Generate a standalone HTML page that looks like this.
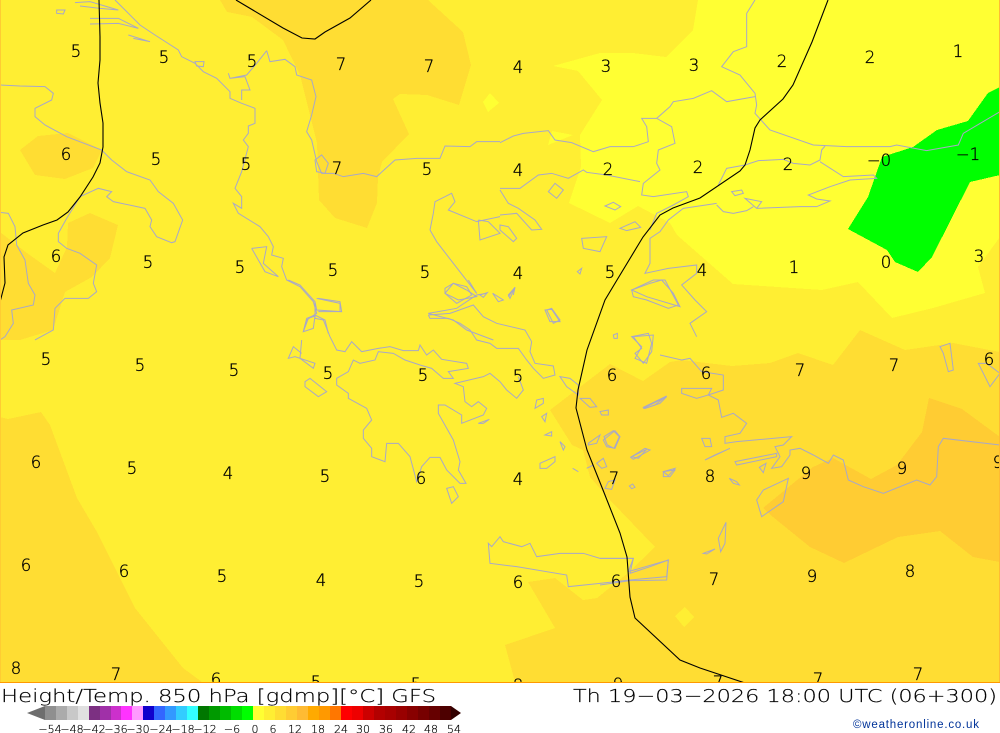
<!DOCTYPE html>
<html><head><meta charset="utf-8"><style>
html,body{margin:0;padding:0;background:#fff;width:1000px;height:733px;overflow:hidden}
svg{display:block;position:absolute;left:0;top:0}
.f polygon{shape-rendering:crispEdges;stroke:none}
.c polyline,.c polygon{fill:none;stroke:#a8a8c8;stroke-width:1;vector-effect:non-scaling-stroke}
.b polyline{fill:none;stroke:#000;stroke-width:1.1}
.n text{font:200 16.5px "DejaVu Sans",sans-serif;fill:#000;stroke:#000;stroke-width:.3;text-anchor:middle}
</style></head><body>
<svg width="1000" height="733" viewBox="0 0 1000 733" xmlns="http://www.w3.org/2000/svg">
<defs><clipPath id="m"><rect width="1000" height="682"/></clipPath></defs>
<g clip-path="url(#m)">
<rect width="1000" height="682" fill="#ffee33"/>
<g class="f">
<polygon fill="#ffff33" points="698,0 693,30 666,57 633,53 600,53 553,66 578,71 602,100 580,135 581,167 569,203 610,223 638,206 670,223 677,235 733,284 822,290 858,282 892,318 933,308 985,293 978,267 1000,237 1000,0"/>
<polygon fill="#ffff33" points="552,131 573,135 548,145"/>
<polygon fill="#ffff33" points="490,93 499,103 488,112 483,102"/>
<polygon fill="#ffdd33" points="220,0 227,12 252,17 283,40 300,75 317,143 319,200 335,218 367,228 377,203 378,177 382,162 409,134 393,99 400,94 427,95 459,105 471,65 463,32 428,0"/>
<polygon fill="#ffdd33" points="20,150 38,136 68,133 102,150 93,168 65,179 35,175"/>
<polygon fill="#ffdd33" points="0,232 27,253 55,273 67,247 68,223 90,213 118,225 110,258 92,277 65,292 53,330 20,340 0,340"/>
<polygon fill="#ffdd33" points="0,417 8,419 41,412 50,425 77,498 97,532 135,608 183,668 202,682 0,682"/>
<polygon fill="#ffdd33" points="1000,352 953,343 905,350 860,330 833,365 798,353 770,363 732,366 682,360 670,362 643,381 610,364 550,410 572,445 583,450 590,477 610,500 655,547 628,573 597,598 583,600 555,578 528,582 555,628 505,645 515,682 1000,682"/>
<polygon fill="#ffee33" points="685,607 694,617 684,627 675,616"/>
<polygon fill="#ffcc33" points="929,398 962,409 1000,437 1000,562 973,557 940,531 898,537 844,563 810,547 773,517 763,508 813,467 833,458 871,479 897,465 922,432"/>
<polygon fill="#00ff00" points="1000,87 988,93 968,121 937,130 913,147 882,157 875,177 868,197 848,229 887,250 895,262 918,272 932,257 970,182 1000,175"/>
</g>

<g class="c" transform="scale(.33333)">
<polyline points="345,0 385,40 420,75 465,105 535,150 545,170 585,190 610,215 650,235 690,275 690,295 725,310 765,325 765,370 745,378 745,400 730,420 745,440 725,515 705,565 725,590 725,625 700,610 715,640 780,680 805,710 820,740 815,765 850,775 845,800 860,840 900,860 940,905 950,940 920,960 910,995"/>
<polyline points="0,255 60,258 135,260 160,280 155,300 105,325 105,350 135,375 200,410 305,450 335,480 380,515 450,540 475,575 520,610 548,660 525,725 515,728 470,710 450,680 455,660 435,625 340,605 320,590 335,575 295,565 240,590 200,655 175,700 175,725 200,745 240,760 290,795 280,850 290,875 265,895 195,895 165,925 160,990 105,1020"/>
<polyline points="0,637 25,640 45,680 50,735 75,780 85,850 105,885 100,915 35,930 40,970 15,1010 0,1020"/>
<polyline points="225,8 270,5 355,30 300,25 240,18"/>
<polygon points="170,30 195,30 190,42 170,40"/>
<polyline points="270,55 355,55 415,85 355,70 270,72"/>
<polyline points="385,105 450,125 400,115"/>
<polygon points="585,185 612,185 610,200 590,198"/>
<polyline points="800,152 770,190 740,225 690,235 685,220 690,235 735,230 750,270 725,270 725,300"/>
<polyline points="800,152 810,185 855,178 885,200 890,225 935,240 948,290 935,345 920,395 935,420 950,485 965,520 1000,520 1030,530 1090,520 1130,530 1185,480 1250,475 1320,475 1335,438 1410,440 1430,425 1500,425"/>
<polyline points="1290,690 1300,640 1305,605 1355,580 1365,605 1345,630 1430,665 1500,650"/>
<polyline points="1290,690 1310,725 1360,790 1430,880"/>
<polygon points="1335,865 1360,850 1400,870 1430,890 1375,900 1335,880"/>
<polyline points="1285,940 1370,925 1430,885 1460,880"/>
<polyline points="1285,940 1360,960 1400,990 1480,1020"/>
<polyline points="755,745 800,740 790,790 835,830 795,815 755,745"/>
<polygon points="950,515 945,480 965,465 985,490 975,520"/>
<polyline points="955,895 1020,905 1025,935 950,930 945,905"/>
<polyline points="910,995 920,955 945,945 975,960 985,1000"/>
<polyline points="1435,660 1465,665 1500,700 1440,720 1435,660"/>
</g>

<g class="c" transform="translate(500,0) scale(.33333)">
<polyline points="0,428 40,408 70,400 145,392 165,420 215,428 280,455 330,440 400,440 445,425 440,380 425,355 470,355 515,380 525,430 475,450 470,490 480,510 430,550 425,585 460,590 560,575 565,590 520,615 470,640 450,690"/>
<polyline points="765,0 740,40 740,140 700,155 665,200 720,225 765,280 770,315 765,340 810,390 940,435 1040,440 1170,440 1190,435 1280,452 1375,435 1390,400 1500,335"/>
<polyline points="470,355 510,320 520,305 580,295 635,272 680,305 765,290"/>
<polyline points="0,565 60,565 115,525 155,520 205,535 250,510 260,517 320,525 420,545"/>
<polyline points="655,555 680,505 735,495 775,482 850,478 880,490 930,495 960,480 965,450 975,438"/>
<polyline points="960,485 1030,530 1120,525 1130,535 1050,540 990,560 925,585 950,597 990,603 950,620 900,620 770,625 735,595 785,605 770,625"/>
<polyline points="650,615 670,635 700,640 740,632 760,620"/>
<polyline points="650,610 550,625 505,660 480,695 450,715 450,790 435,820 505,805 590,795 590,820 545,855 585,900 620,935 570,970 590,1010"/>
<polygon points="145,575 165,550 190,570 170,595"/>
<polygon points="315,618 340,607 362,620 345,630"/>
<polygon points="360,685 405,665 422,682 380,692"/>
<polygon points="695,575 725,570 730,580 705,587"/>
<polygon points="245,715 320,710 300,755 250,745"/>
<polygon points="395,870 460,840 495,840 535,915 505,925 440,900 400,890"/>
<polyline points="0,570 25,610 55,625 105,660 125,688 95,690 50,640 0,645"/>
<polygon points="0,675 25,680 50,715 40,725 0,690"/>
<polygon points="140,930 155,925 180,960 160,970"/>
<polygon points="232,815 245,805 240,822"/>
<polygon points="25,885 45,862 30,895"/>
<polygon points="340,1005 352,1000 352,1015 342,1015"/>
</g>

<g class="c" transform="translate(250,280) scale(.33333)">
<polyline points="115,0 150,15 195,65 195,115 220,120 240,170 260,210 285,215 305,185 335,215 385,205 420,200 460,212 505,212 510,195 530,225 550,210 575,238 650,250 655,265 595,275 610,295 580,295 545,265 510,255 465,240 430,220 385,215 375,240 330,250 310,240 295,275 260,295 260,315 295,340 295,355 350,385 365,420 340,450 340,475 365,505 365,530 405,545 410,490 445,490 480,530 500,605 515,560 540,532 570,532 590,570 630,610 648,610 625,570 630,545 610,480 565,400 565,375 585,375 635,405 635,430 700,405 710,385 685,365 665,380 645,365 640,320 615,310 700,290 720,280 750,305 770,330 800,355 820,330 805,290"/>
<polygon points="585,40 610,10 650,20 665,45 620,70"/>
<polyline points="655,0 680,40"/>
<polyline points="535,105 600,100 670,75 700,110 740,130 825,150 845,185 840,215 855,250 910,258 915,285 880,295 850,265 830,240 805,205 740,205 720,190 680,180 660,150 630,130 595,115 540,115 535,105"/>
<polyline points="200,55 270,70 270,95 205,95"/>
<polygon points="160,155 175,115 195,108 190,145"/>
<polyline points="155,180 150,235 190,265 195,250 135,230 115,235 130,200 155,220"/>
<polygon points="165,305 180,295 230,335 205,350 165,320"/>
<polygon points="590,625 610,620 625,650 605,670"/>
<polygon points="715,790 720,850 800,860 950,885 955,920 1050,910 1140,900 1250,890 1255,840 1200,860 1140,880 1150,835 1050,835 1000,820 930,820 860,830 840,790 815,800 760,785 750,770 725,800"/>
<polygon points="885,90 905,88 930,125 900,125"/>
<polygon points="855,385 860,360 880,355 880,370"/>
<polygon points="875,410 890,400 885,425"/>
<polygon points="885,465 905,455 905,468"/>
<polygon points="930,485 945,500 940,510"/>
<polygon points="870,550 915,530 915,545 890,565 870,565"/>
<polygon points="930,290 960,295 985,315 985,345 950,320"/>
<polygon points="990,355 1020,355 1040,380 1020,382"/>
<polygon points="1050,395 1075,390 1075,405 1055,405"/>
<polygon points="1015,490 1050,465 1040,490 1015,495"/>
<polygon points="1060,480 1095,452 1110,470 1095,505 1070,500"/>
<polygon points="1040,550 1060,535 1070,560 1055,565"/>
<polygon points="1145,530 1190,508 1165,535"/>
<polygon points="1180,385 1250,350 1230,370 1185,385"/>
<polygon points="1240,575 1275,570 1260,590 1240,590"/>
<polygon points="1145,30 1200,10 1235,0 1270,40 1290,80 1190,50"/>
<polygon points="1145,170 1195,160 1205,190 1190,250 1155,235 1175,200"/>
<polygon points="728,40 760,60 745,65"/>
<polyline points="775,50 795,22 790,45"/>
<polygon points="690,45 712,38 700,52"/>
<polygon points="685,430 718,418 700,430"/>
<polygon points="1075,605 1095,600 1085,628 1065,625"/>
<polyline points="1010,565 1030,555"/>
<polyline points="968,565 985,575"/>
<polygon points="1138,618 1148,612 1155,622 1145,626"/>
</g>

<g class="c" transform="translate(600,330) scale(.33333)">
<polyline points="180,75 245,90 270,85 305,125 370,135 370,180 325,195 355,210 365,262 400,250 440,280 420,310 375,320 375,340 410,335 575,320 550,345 525,350 540,380 515,415 545,410 570,375 570,360 600,355 640,375 685,400 700,375 730,390 745,450 790,470 850,490 950,450 990,465 1010,440 1015,350 1030,325 1200,345"/>
<polygon points="245,175 335,175 325,195 290,205 245,190"/>
<polygon points="130,232 200,198 165,225 135,235"/>
<polygon points="405,395 530,370 530,380 410,405"/>
<polygon points="315,390 390,355 345,375"/>
<polygon points="470,510 490,480 565,445 550,515 485,560"/>
<polygon points="305,325 330,325 335,350 315,350"/>
<polygon points="190,425 225,415 205,437"/>
<polygon points="355,625 378,577 375,640 362,665"/>
<polygon points="310,670 345,657 320,672"/>
<polyline points="0,685 100,685 85,725 205,690 200,750 90,752 0,765"/>
<polygon points="1020,50 1050,40 1060,120 1045,125 1030,70"/>
<polygon points="1135,100 1160,100 1200,130 1170,170 1150,130"/>
<polygon points="100,20 160,15 155,65 130,100 105,70 125,55"/>
<polygon points="388,445 410,455 418,465 400,460"/>
<polygon points="478,412 498,400 490,428"/>
<polygon points="12,320 40,302 58,320 42,355 22,345"/>
<polygon points="92,382 135,355 150,360 100,388"/>
</g>

<g class="b">
<polyline points="99,0 100,37 100,60 98,83 100,103 103,123 103,147 100,163 93,177 80,197 68,212 57,220 43,225 23,233 8,245 4,257 5,283 0,302"/>
<polyline points="236,0 283,28 302,38 315,39 325,32 350,18 371,0"/>
<polyline points="828,0 812,42 793,85 783,99 760,120 755,128 750,150 745,165 740,171 700,198 673,208 660,215 643,237 617,280 605,300 587,350 578,390 576,408 587,450 603,490 620,533 627,557 630,597 635,618 680,660 700,668 745,683"/>
</g>

<g class="n">
<text x="76" y="57">5</text><text x="164" y="63">5</text><text x="252" y="67">5</text><text x="341" y="70">7</text><text x="429" y="72">7</text><text x="518" y="73">4</text><text x="606" y="72">3</text><text x="694" y="71">3</text><text x="782" y="67">2</text><text x="870" y="63">2</text><text x="958" y="57">1</text>
<text x="66" y="160">6</text><text x="156" y="165">5</text><text x="246" y="170">5</text><text x="337" y="174">7</text><text x="427" y="175">5</text><text x="518" y="176">4</text><text x="608" y="175">2</text><text x="698" y="173">2</text><text x="788" y="170">2</text><text x="879" y="166">−0</text><text x="968" y="160">−1</text>
<text x="56" y="262">6</text><text x="148" y="268">5</text><text x="240" y="273">5</text><text x="333" y="276">5</text><text x="425" y="278">5</text><text x="518" y="279">4</text><text x="610" y="278">5</text><text x="702" y="276">4</text><text x="794" y="273">1</text><text x="886" y="268">0</text><text x="979" y="262">3</text>
<text x="46" y="365">5</text><text x="140" y="371">5</text><text x="234" y="376">5</text><text x="328" y="379">5</text><text x="423" y="381">5</text><text x="518" y="382">5</text><text x="612" y="381">6</text><text x="706" y="379">6</text><text x="800" y="376">7</text><text x="894" y="371">7</text><text x="989" y="365">6</text>
<text x="36" y="468">6</text><text x="132" y="474">5</text><text x="228" y="479">4</text><text x="325" y="482">5</text><text x="421" y="484">6</text><text x="518" y="485">4</text><text x="614" y="484">7</text><text x="710" y="482">8</text><text x="806" y="479">9</text><text x="902" y="474">9</text><text x="998" y="468">9</text>
<text x="26" y="571">6</text><text x="124" y="577">6</text><text x="222" y="582">5</text><text x="321" y="586">4</text><text x="419" y="587">5</text><text x="518" y="588">6</text><text x="616" y="587">6</text><text x="714" y="585">7</text><text x="812" y="582">9</text><text x="910" y="577">8</text>
<text x="16" y="674">8</text><text x="116" y="680">7</text><text x="216" y="685">6</text><text x="316" y="688">5</text><text x="416" y="690">5</text><text x="518" y="691">8</text><text x="618" y="690">9</text><text x="718" y="688">7</text><text x="818" y="685">7</text><text x="918" y="680">7</text>
</g>
</g>
<rect x="0" y="0" width="1" height="682" fill="#ffcc33"/>
<rect x="999" y="0" width="1" height="682" fill="#ffbb33"/>
<rect x="0" y="682" width="1000" height="1" fill="#ff9900"/>

<text x="1" y="702" font-family="'DejaVu Sans',sans-serif" font-size="18" font-weight="200" textLength="435" lengthAdjust="spacingAndGlyphs" fill="#000" stroke="#000" stroke-width=".15">Height/Temp. 850 hPa [gdmp][°C] GFS</text>
<text x="573" y="702" font-family="'DejaVu Sans',sans-serif" font-size="18" font-weight="200" textLength="424" lengthAdjust="spacingAndGlyphs" fill="#000" stroke="#000" stroke-width=".15">Th 19−03−2026 18:00 UTC (06+300)</text>

<g shape-rendering="crispEdges">
<polygon points="27,713 45,706 45,720" fill="#6e6e6e" shape-rendering="auto"/>
<rect x="45" y="706" width="11" height="14" fill="#8f8f8f"/><rect x="56" y="706" width="11" height="14" fill="#ababab"/><rect x="67" y="706" width="11" height="14" fill="#c8c8c8"/><rect x="78" y="706" width="11" height="14" fill="#e0e0e0"/>
<rect x="89" y="706" width="11" height="14" fill="#7c3082"/><rect x="100" y="706" width="11" height="14" fill="#a030a8"/><rect x="111" y="706" width="10" height="14" fill="#cc30cc"/><rect x="121" y="706" width="11" height="14" fill="#ff33ff"/><rect x="132" y="706" width="11" height="14" fill="#ff99ff"/>
<rect x="143" y="706" width="11" height="14" fill="#1100cc"/><rect x="154" y="706" width="11" height="14" fill="#3366ff"/><rect x="165" y="706" width="11" height="14" fill="#3399ff"/><rect x="176" y="706" width="11" height="14" fill="#33ccff"/><rect x="187" y="706" width="11" height="14" fill="#33ffff"/>
<rect x="198" y="706" width="11" height="14" fill="#007700"/><rect x="209" y="706" width="11" height="14" fill="#009900"/><rect x="220" y="706" width="11" height="14" fill="#00bb00"/><rect x="231" y="706" width="11" height="14" fill="#00dd00"/><rect x="242" y="706" width="11" height="14" fill="#00ff00"/>
<rect x="253" y="706" width="11" height="14" fill="#ffff33"/><rect x="264" y="706" width="11" height="14" fill="#ffee33"/><rect x="275" y="706" width="11" height="14" fill="#ffdd33"/><rect x="286" y="706" width="11" height="14" fill="#ffcc33"/><rect x="297" y="706" width="11" height="14" fill="#ffbb33"/>
<rect x="308" y="706" width="11" height="14" fill="#ffaa00"/><rect x="319" y="706" width="11" height="14" fill="#ff9900"/><rect x="330" y="706" width="11" height="14" fill="#ff7700"/>
<rect x="341" y="706" width="11" height="14" fill="#ff0000"/><rect x="352" y="706" width="11" height="14" fill="#ee0000"/><rect x="363" y="706" width="11" height="14" fill="#cc0000"/><rect x="374" y="706" width="11" height="14" fill="#b30000"/><rect x="385" y="706" width="11" height="14" fill="#a80000"/><rect x="396" y="706" width="11" height="14" fill="#990000"/><rect x="407" y="706" width="11" height="14" fill="#880000"/><rect x="418" y="706" width="11" height="14" fill="#770000"/><rect x="429" y="706" width="11" height="14" fill="#660000"/><rect x="440" y="706" width="11" height="14" fill="#4d0000"/>
<polygon points="451,706 461,713 451,720" fill="#330000" shape-rendering="auto"/>
</g>

<g font-family="'DejaVu Sans',sans-serif" font-weight="200" font-size="11" fill="#000" stroke="#000" stroke-width=".2" text-anchor="middle">
<text x="50" y="733">−54</text><text x="72" y="733">−48</text><text x="94" y="733">−42</text><text x="116" y="733">−36</text><text x="138" y="733">−30</text><text x="161" y="733">−24</text><text x="183" y="733">−18</text><text x="205" y="733">−12</text><text x="232" y="733">−6</text><text x="255" y="733">0</text><text x="273" y="733">6</text><text x="295" y="733">12</text><text x="318" y="733">18</text><text x="341" y="733">24</text><text x="363" y="733">30</text><text x="386" y="733">36</text><text x="409" y="733">42</text><text x="431" y="733">48</text><text x="454" y="733">54</text>
</g>
<text x="853" y="728" font-family="'Liberation Sans',sans-serif" font-size="11.5" textLength="126" lengthAdjust="spacing" fill="#003399">©weatheronline.co.uk</text>
</svg>
</body></html>
